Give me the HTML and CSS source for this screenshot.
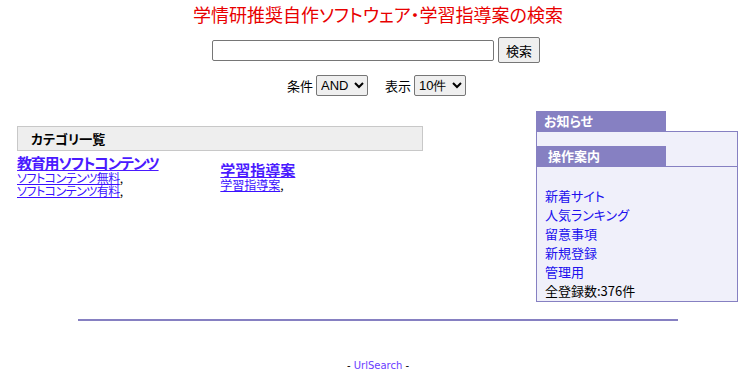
FILE: index.html
```html
<!DOCTYPE html>
<html lang="ja">
<head>
    <meta charset="UTF-8">
    <meta name="viewport" content="width=device-width, initial-scale=1.0">
    <title>学情研推奨自作ソフトウェア・学習指導案の検索</title>
    <link rel="stylesheet" href="styles.css">
</head>
<body>
    <h1 class="title">学情研推奨自作ソフトウェア・学習指導案の検索</h1>
    <form class="search">
        <div class="search-row">
            <input type="text" class="keyword">
            <button type="button" class="search-btn">検索</button>
        </div>
        <div class="option-row">
            <label>条件 <select class="opt"><option>AND</option><option>OR</option></select></label>
            <label>表示 <select class="opt"><option>10件</option><option>20件</option><option>50件</option></select></label>
        </div>
    </form>

    <div class="main">
        <div class="categories">
            <div class="cat-head">カテゴリ一覧</div>
            <table class="cat-table">
                <tr>
                    <td>
                        <a href="#" class="cat-name narrow">教育用ソフトコンテンツ</a>
                        <div class="cat-sub"><a href="#" class="narrow">ソフトコンテンツ無料</a>,</div>
                        <div class="cat-sub"><a href="#" class="narrow">ソフトコンテンツ有料</a>,</div>
                    </td>
                    <td>
                        <a href="#" class="cat-name">学習指導案</a>
                        <div class="cat-sub"><a href="#">学習指導案</a>,</div>
                    </td>
                </tr>
            </table>
        </div>

        <div class="side">
            <div class="side-title">お知らせ</div>
            <div class="side-box news">
                <div class="side-title inner">操作案内</div>
            </div>
            <div class="side-box guide">
                <a href="#">新着サイト</a>
                <a href="#">人気ランキング</a>
                <a href="#">留意事項</a>
                <a href="#">新規登録</a>
                <a href="#">管理用</a>
                <span>全登録数:376件</span>
            </div>
        </div>
    </div>

    <hr class="rule">
    <div class="footer">- <a href="#">UrlSearch</a> -</div>
</body>
</html>
```

FILE: styles.css
```css
body {
    margin: 0;
    font-family: "Noto Sans CJK JP", "Liberation Sans", sans-serif;
    font-feature-settings: "palt";
    font-size: 13px;
    color: #000;
    background: #fff;
}
a {
    color: #2a12ff;
}
.title {
    margin: 4px 0 0;
    font-size: 18px;
    font-weight: normal;
    line-height: 20px;
    color: #e80000;
    text-align: center;
}
.search {
    margin: 0;
}
.search-row {
    display: flex;
    justify-content: center;
    align-items: center;
    gap: 4px;
    margin-top: 13px;
    padding-right: 4px;
    height: 26px;
}
.keyword {
    width: 282px;
    height: 21px;
    box-sizing: border-box;
    border: 1px solid #767676;
    border-radius: 2px;
    margin: 0;
}
.search-btn {
    width: 42px;
    height: 26px;
    padding: 0;
    font-family: inherit;
    font-size: 13px;
    background: #efefef;
    border: 1px solid #767676;
    border-radius: 2px;
}
.option-row {
    display: flex;
    justify-content: center;
    gap: 17px;
    margin-top: 12px;
    padding-right: 3px;
    height: 22px;
    line-height: 22px;
}
.opt {
    width: 52px;
    height: 21px;
    font-family: "Liberation Sans", sans-serif;
    font-size: 13px;
    border: 1px solid #767676;
    border-radius: 2px;
    vertical-align: top;
}
.main {
    display: flex;
    justify-content: space-between;
    align-items: flex-start;
    margin-top: 14px;
    padding: 0 18px 0 17px;
}
.categories {
    width: 406px;
    margin-top: 15px;
}
.cat-head {
    height: 23px;
    line-height: 23px;
    padding-left: 13px;
    background: #eeeeee;
    border: 1px solid #c8c8c8;
    font-weight: bold;
}
.cat-table {
    border-collapse: collapse;
    margin-top: 3px;
}
.cat-table td {
    width: 204px;
    padding: 0;
    vertical-align: middle;
}
.cat-name {
    display: block;
    width: max-content;
    font-size: 15px;
    font-weight: bold;
    line-height: 17px;
    color: #4a1aff;
}
.cat-name.narrow {
    letter-spacing: -1.2px;
}
.cat-sub {
    line-height: 13px;
    font-size: 12px;
}
.cat-sub .narrow {
    letter-spacing: -0.5px;
}
.cat-sub a {
    color: #3a10ff;
}
.side {
    width: 202px;
}
.side-title {
    width: 130px;
    height: 20px;
    line-height: 20px;
    box-sizing: border-box;
    padding-left: 8px;
    background: #8680c2;
    color: #fff;
    font-weight: bold;
}
.side-box {
    background: #f0f0fa;
    border: 1px solid #8680c2;
}
.news {
    border-top: 1px solid #8680c2;
    border-bottom: 1px solid #8680c2;
    padding-top: 14px;
}
.side-title.inner {
    margin-left: -1px;
    padding-left: 12px;
}
.guide {
    border-top: none;
    display: flex;
    flex-direction: column;
    align-items: flex-start;
    padding: 19px 0 1px 8px;
    line-height: 19px;
}
.guide a {
    color: #2010ee;
    text-decoration: none;
}
.rule {
    width: 600px;
    height: 2px;
    margin: 17px auto 0;
    border: none;
    background: #8680c2;
}
.footer {
    margin-top: 38px;
    text-align: center;
    font-family: "DejaVu Sans", Verdana, sans-serif;
    font-size: 10px;
    line-height: 14px;
}
.footer a {
    color: #6a3cff;
    text-decoration: none;
}
```
